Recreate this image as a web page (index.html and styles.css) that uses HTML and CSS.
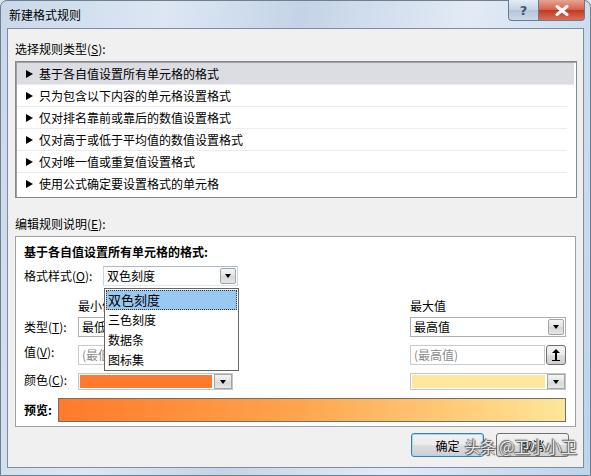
FILE: index.html
```html
<!DOCTYPE html>
<html lang="zh-CN">
<head>
    <meta charset="UTF-8">
    <title>新建格式规则</title>
    <link rel="stylesheet" href="styles.css">
</head>
<body>
    <div class="window">
        <div class="titlebar">
            <span class="title">新建格式规则</span>
            <div class="caption-btns">
                <div class="cap-btn help">?</div>
                <div class="cap-btn close">
                    <svg width="14" height="11" viewBox="0 0 14 11">
                        <path d="M2 1.5L12 9.5M12 1.5L2 9.5" stroke="#fff" stroke-width="3" stroke-linecap="round"/>
                    </svg>
                </div>
            </div>
        </div>

        <div class="client">
            <div class="group-label">选择规则类型(<u>S</u>):</div>
            <ul class="rule-list">
                <li class="selected"><i class="arrow"></i>基于各自值设置所有单元格的格式</li>
                <li><i class="arrow"></i>只为包含以下内容的单元格设置格式</li>
                <li><i class="arrow"></i>仅对排名靠前或靠后的数值设置格式</li>
                <li><i class="arrow"></i>仅对高于或低于平均值的数值设置格式</li>
                <li><i class="arrow"></i>仅对唯一值或重复值设置格式</li>
                <li><i class="arrow"></i>使用公式确定要设置格式的单元格</li>
            </ul>

            <div class="group-label edit-label">编辑规则说明(<u>E</u>):</div>
            <div class="edit-panel">
                <div class="panel-title">基于各自值设置所有单元格的格式:</div>
                <div class="style-row">
                    <span class="field-label">格式样式(<u>O</u>):</span>
                    <div class="combo style-combo">
                        <span class="combo-text">双色刻度</span>
                        <span class="drop-btn"><i class="tri"></i></span>
                        <ul class="dropdown">
                            <li class="active">双色刻度</li>
                            <li>三色刻度</li>
                            <li>数据条</li>
                            <li>图标集</li>
                        </ul>
                    </div>
                </div>

                <div class="rule-grid">
                    <span></span>
                    <span class="col-head">最小值</span>
                    <span></span>
                    <span class="col-head">最大值</span>

                    <span class="field-label">类型(<u>T</u>):</span>
                    <div class="combo">
                        <span class="combo-text">最低值</span>
                        <span class="drop-btn"><i class="tri"></i></span>
                    </div>
                    <span></span>
                    <div class="combo">
                        <span class="combo-text">最高值</span>
                        <span class="drop-btn"><i class="tri"></i></span>
                    </div>

                    <span class="field-label">值(<u>V</u>):</span>
                    <div class="value-box">
                        <span class="value-input">(最低值)</span>
                        <span class="ref-btn"><i class="up"></i></span>
                    </div>
                    <span></span>
                    <div class="value-box">
                        <span class="value-input">(最高值)</span>
                        <span class="ref-btn"><i class="up"></i></span>
                    </div>

                    <span class="field-label">颜色(<u>C</u>):</span>
                    <div class="color-combo">
                        <span class="swatch min-color"></span>
                        <span class="drop-btn"><i class="tri"></i></span>
                    </div>
                    <span></span>
                    <div class="color-combo">
                        <span class="swatch max-color"></span>
                        <span class="drop-btn"><i class="tri"></i></span>
                    </div>
                </div>

                <div class="preview-row">
                    <span class="preview-label">预览:</span>
                    <div class="preview-bar"></div>
                </div>
            </div>

            <div class="buttons">
                <button class="btn btn-default">确定</button>
                <button class="btn">取消</button>
            </div>
            <div class="watermark">头条 @卫小小卫</div>
        </div>
    </div>
</body>
</html>
```
FILE: styles.css
```css
body {
    margin: 0;
    font-family: "Noto Sans CJK SC", "Noto Sans", sans-serif;
    font-size: 12px;
    color: #000;
    background: #dbe6f2;
}

u {
    text-decoration: underline;
    text-underline-offset: 1px;
}

.window {
    width: 591px;
    height: 476px;
    box-sizing: border-box;
    border: 1px solid #6f7f92;
    border-radius: 7px 7px 0 0;
    background: linear-gradient(100deg, #c9d8e9 0%, #dce7f3 25%, #c4d4e6 45%, #e2ebf5 70%, #bcd3ec 100%);
    display: flex;
    flex-direction: column;
}

.titlebar {
    height: 27px;
    display: flex;
    align-items: flex-start;
    justify-content: space-between;
    padding-left: 8px;
}

.title {
    margin-top: 7px;
    line-height: 14px;
    color: #000;
}

.caption-btns {
    display: flex;
    margin-right: 5px;
    margin-top: -1px;
}

.cap-btn {
    height: 20px;
    border: 1px solid #6a7b90;
    border-top: none;
    display: flex;
    align-items: center;
    justify-content: center;
}

.help {
    width: 29px;
    border-radius: 0 0 0 4px;
    border-right: none;
    background: linear-gradient(#e4ecf5, #c5d3e3 50%, #b4c5d8 51%, #cbd8e6);
    color: #41536a;
    font-family: "DejaVu Sans", sans-serif;
    font-weight: bold;
    font-size: 13px;
}

.close {
    width: 45px;
    border-radius: 0 0 4px 0;
    background: linear-gradient(#e8a493, #d4604a 50%, #c2381e 51%, #d8705a);
}

.client {
    position: relative;
    flex: 1;
    margin: 0 6px 7px 6px;
    border: 1px solid #7d8da0;
    background: #f0f0f0;
    padding: 0 6px 0 7px;
}

.group-label {
    margin-top: 13px;
    line-height: 14px;
}

.rule-list {
    list-style: none;
    margin: 5px 0 0 0;
    padding: 1px 2px 0 1px;
    height: 134px;
    border: 1px solid #828790;
    background: #fff;
    box-shadow: inset 1px 1px 0 #a0a0a0;
}

.rule-list li {
    display: flex;
    align-items: center;
    height: 21px;
    border-bottom: 1px solid #ececec;
    padding-left: 9px;
    margin-right: 7px;
}

.rule-list li.selected {
    background: #dcdce3;
    margin-right: 0;
}

.rule-list li:last-child {
    border-bottom: none;
}

.arrow {
    width: 0;
    height: 0;
    border-top: 4px solid transparent;
    border-bottom: 4px solid transparent;
    border-left: 7px solid #000;
    margin-right: 6px;
}

.edit-label {
    margin-top: 19px;
}

.edit-panel {
    margin: 5px 1px 0 0;
    height: 191px;
    border: 1px solid #a0a0a0;
    background: #fff;
    padding: 8px 8px 0 8px;
    box-sizing: border-box;
}

.panel-title {
    font-weight: bold;
    line-height: 14px;
}

.style-row {
    display: flex;
    align-items: center;
    margin-top: 7px;
}

.field-label {
    line-height: 14px;
}

.style-row .field-label {
    width: 79px;
}

.combo {
    position: relative;
    display: flex;
    align-items: center;
    height: 20px;
    border: 1px solid #abadb3;
    background: #fff;
    box-sizing: border-box;
}

.style-combo {
    width: 135px;
    border-color: #a9b9cc #c5d5e6 #dbe7f3 #c5d5e6;
}

.combo-text {
    flex: 1;
    padding-left: 3px;
    line-height: 14px;
}

.drop-btn {
    width: 16px;
    height: 16px;
    margin-right: 1px;
    border: 1px solid #a2a5ab;
    box-sizing: border-box;
    border-radius: 2px;
    background: linear-gradient(#f4f4f4, #e2e2e2 50%, #d6d6d6 51%, #e6e6e6);
    display: flex;
    align-items: center;
    justify-content: center;
}

.tri {
    width: 0;
    height: 0;
    border-left: 3.5px solid transparent;
    border-right: 3.5px solid transparent;
    border-top: 4px solid #000;
}

.dropdown {
    position: absolute;
    top: 21px;
    left: 0;
    width: 135px;
    margin: 0;
    padding: 1px;
    list-style: none;
    border: 1px solid #646464;
    background: #fff;
    box-sizing: border-box;
    z-index: 2;
    height: 83px;
}

.dropdown li {
    height: 20px;
    line-height: 20px;
    padding-left: 2px;
}

.dropdown li.active {
    background: #99c9f0;
    outline: 1px dotted #333;
    outline-offset: -1px;
    font-size: 13px;
}

.rule-grid {
    display: grid;
    grid-template-columns: 54px 155px 177px 156px;
    grid-template-rows: 10px 20px 20px 17px;
    row-gap: 8px;
    align-items: center;
    margin-top: 13px;
}

.rule-grid > :nth-child(n+9) {
    align-self: stretch;
}

.col-head {
    line-height: 14px;
    align-self: start;
}

.value-box {
    display: flex;
    height: 20px;
}

.value-input {
    flex: 1;
    border: 1px solid #c8cbd0;
    padding-left: 3px;
    line-height: 18px;
    color: #8a8a8a;
    background: #fff;
}

.ref-btn {
    width: 20px;
    height: 20px;
    margin-left: 1px;
    box-sizing: border-box;
    border: 1px solid #707070;
    border-radius: 3px;
    background: linear-gradient(#f2f2f2, #ebebeb 50%, #dddddd 51%, #cfcfcf);
    display: flex;
    align-items: center;
    justify-content: center;
}

.up {
    position: relative;
    width: 2px;
    height: 8px;
    background: #000;
    margin-top: 2px;
}

.up::before {
    content: "";
    position: absolute;
    top: -3px;
    left: -3px;
    border-left: 4px solid transparent;
    border-right: 4px solid transparent;
    border-bottom: 4px solid #000;
}

.up::after {
    content: "";
    position: absolute;
    top: 8px;
    left: -3px;
    width: 8px;
    height: 1px;
    background: #000;
}

.color-combo {
    display: flex;
    align-items: center;
    height: 17px;
    border: 1px solid #c6c6c6;
    box-sizing: border-box;
    background: #fff;
}

.swatch {
    flex: 1;
    height: 13px;
    margin: 0 2px 0 1px;
}

.min-color {
    background: #ff7a2e;
}

.max-color {
    background: #ffe89e;
}

.color-combo .drop-btn {
    width: 18px;
    height: 15px;
    margin-right: 0;
    border-radius: 0;
}

.preview-row {
    display: flex;
    align-items: center;
    margin-top: 8px;
}

.preview-label {
    width: 34px;
    font-weight: bold;
    line-height: 14px;
}

.preview-bar {
    width: 506px;
    height: 22px;
    border: 1px solid #707070;
    background: linear-gradient(90deg, #ff7a2a 0%, #ffa24a 45%, #ffe698 100%);
}

.buttons {
    display: flex;
    justify-content: flex-end;
    gap: 12px;
    margin-top: 6px;
    padding-right: 8px;
}

.btn {
    width: 73px;
    height: 24px;
    font-family: inherit;
    font-size: 12px;
    color: #000;
    border: 1px solid #707070;
    border-radius: 3px;
    background: linear-gradient(#f2f2f2, #ebebeb 50%, #dddddd 51%, #cfcfcf);
    padding: 0;
}

.btn-default {
    border-color: #3c7fb1;
    box-shadow: inset 0 0 0 1px #9fdaf5;
}

.watermark {
    position: absolute;
    right: 6px;
    bottom: 9px;
    font-size: 16px;
    letter-spacing: -0.3px;
    color: rgba(255, 255, 255, 0.9);
    text-shadow: 0 0 1px #333, 1px 1px 1px #555, -1px -1px 1px #666;
}
```
